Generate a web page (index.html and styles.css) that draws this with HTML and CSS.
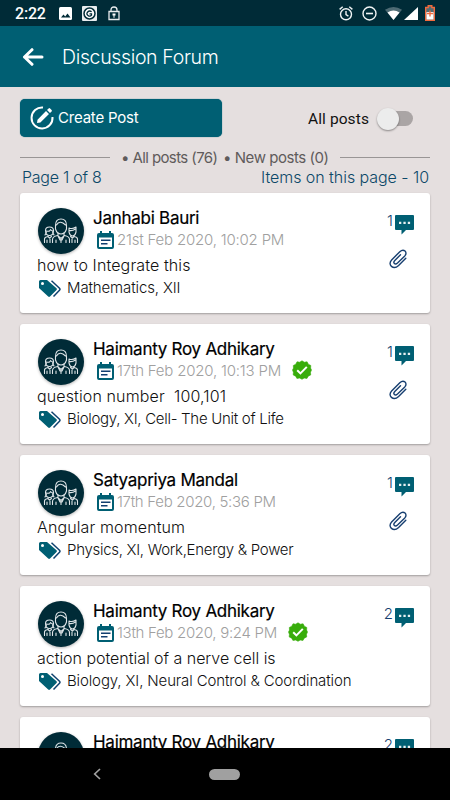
FILE: index.html
```html
<!DOCTYPE html>
<html lang="en">
<head>
<meta charset="utf-8">
<title>Discussion Forum</title>
<link rel="stylesheet" href="styles.css">
</head>
<body>
<svg class="sprite" aria-hidden="true">
  <symbol id="people" viewBox="0 0 46 46">
    <g fill="none" stroke="#dfe5e8" stroke-width="1.1" stroke-linejoin="round" stroke-linecap="round">
      <path d="M17.500 17.500q0-6.500 5.500-6.500t5.500 6.500v3.500q-1.500 5-5.500 5t-5.500-5zM18.500 17q1.500-3 4-2.800t5 2.800"/>
      <path d="M14.500 34.500v-3q0-3 5-4l3.500 3 3.500-3q5 1 5 4v3M20 25v2.500M26 25v2.500M23 30.500v4M18 32v2.500M28 32v2.500M20.500 29l1.500 3M25.500 29l-1.500 3"/>
      <path d="M7.500 22.500q0-3.500 4-3.500t4 3.500q0 5-4 5t-4-5zM8.500 23q3.500 1 4-1.500 1 1.500 2.500 1.500M7 27l1.500-3M16 27l-1.500-3"/>
      <path d="M31 20q3.500 1.500 7-1v5q-1 4-3.500 4T31 24zM31.500 22.500q3 .5 6-1.500"/>
      <path d="M6.500 34.500V31q0-2 3.500-2.500l1.500 1.500 2-1.500M9 32v2.500M12 31v3.500M39.500 34.500V31q0-2-3.500-2.500L34.500 30l-2-1.500M37 32v2.500M34 31v3.500"/>
    </g>
  </symbol>
  <symbol id="calendar" viewBox="0 0 17 18">
    <path fill="#005f73" d="M2 2h1V0h2v2h7V0h2v2h1q2 0 2 2v12q0 2-2 2H2q-2 0-2-2V4q0-2 2-2zm0 4.500V16h13V6.500z"/>
    <path fill="#123f70" d="M4 8.500h9.500V10H4zM4 12h6.500v1.500H4z"/>
  </symbol>
  <symbol id="tags" viewBox="0 0 22 17">
    <path fill="#005f73" fill-rule="evenodd" d="M1.500 0H8l9.500 8.200q.8.900 0 1.800l-6.500 6.500q-.9.900-1.800 0L0 8V1.500Q0 0 1.500 0zM3.500 2a1.500 1.500 0 1 0 0 3 1.500 1.500 0 0 0 0-3z"/>
    <path fill="none" stroke="#10426f" stroke-width="1.500" d="M12.500.8l8 7.500q1 1 0 2L14.500 16.500"/>
  </symbol>
  <symbol id="chat" viewBox="0 0 19 20">
    <path fill="#005f73" d="M1 0h17q1 0 1 1v13q0 1-1 1h-7l-4.500 4.500V15H1q-1 0-1-1V1Q0 0 1 0z"/>
    <path fill="#e9f1f3" d="M4 6.700h2.300V9H4zM8.400 6.700h2.300V9H8.400zM12.800 6.700h2.300V9h-2.300z"/>
  </symbol>
  <symbol id="clip" viewBox="0 0 18 20">
    <path fill="none" stroke="#173f70" stroke-width="1.400" stroke-linecap="round" d="M16.800 9.300l-7.200 7.200c-5.300 5-11.500-.8-7-5.600l8.200-8.200c4-3.700 8.300.6 5 4.200L8.500 14c-2.500 2.300-5-.2-2.700-2.600l5.700-5.600"/>
  </symbol>
  <symbol id="verified" viewBox="0 0 20 20">
    <path fill="#38ad0b" stroke="#38ad0b" stroke-width=".6" stroke-linejoin="round" d="M10 .8l2.300 1.400 2.800-.4 1.200 2.400 2.500 1.300-.2 2.600L19.500 10l-1 2.300.2 2.600-2.500 1.300-1.200 2.200-2.800-.3L10 19.300l-2.300-1.200-2.800.3-1.200-2.200-2.500-1.300.2-2.600L.5 10l1-1.900-.2-2.600 2.500-1.300 1.200-2.400 2.700.4z"/>
    <path fill="none" stroke="#fff" stroke-width="2" d="M5.200 10.200l3.200 3.200 6.400-6.500"/>
  </symbol>
</svg>

<div class="screen">
  <div class="status">
    <span class="clock">2:22</span>
    <svg class="st-img" viewBox="0 0 13 13"><rect width="13" height="13" rx="1.500" fill="#fff"/><path fill="#002b37" d="M2 10.500l2.500-3 1.700 2L8.500 6.500l3 4z"/></svg>
    <svg class="st-g" viewBox="0 0 15 15"><rect width="15" height="15" rx="1" fill="#e8ecee"/><circle cx="7.500" cy="7.500" r="5.500" fill="#fff" stroke="#002b37" stroke-width="1.500"/><path fill="none" stroke="#002b37" stroke-width="1.300" d="M9.600 5.800Q7.500 4 5.700 6t.3 3.500 3.500-.3V7.800h-2"/></svg>
    <svg class="st-lock" viewBox="0 0 12 15"><path fill="none" stroke="#e8ecee" stroke-width="1.300" d="M1 5.500h10v8H1zM3 5.500V4q0-3 3-3t3 3v1.500"/><path fill="#fff" d="M4.500 7.500h3v2h-1v2.300h-1V9.500h-1z"/></svg>
    <span class="grow"></span>
    <svg class="st-alarm" viewBox="0 0 14 15"><g fill="none" stroke="#f1f4f5" stroke-width="1.400"><circle cx="7" cy="8.300" r="5.500"/><path d="M7 5v3.600l2.400 1.500M.6 3.400L3.700.8M13.400 3.400L10.300.8"/></g></svg>
    <svg class="st-dnd" viewBox="0 0 15 15"><circle cx="7.500" cy="7.500" r="6.500" fill="none" stroke="#f1f4f5" stroke-width="1.400"/><path stroke="#f1f4f5" stroke-width="1.600" d="M4 7.500h7"/></svg>
    <svg class="st-wifi" viewBox="0 0 17 13"><path fill="#4d6a73" d="M0 2.700q8.500-5.400 17 0L8.500 13z"/><path fill="#fff" d="M2.500 5.500q6-4 12 0L8.500 13z"/></svg>
    <svg class="st-signal" viewBox="0 0 14 13"><path fill="#fff" d="M14 0v13H0z"/></svg>
    <svg class="st-battery" viewBox="0 0 10 16"><path fill="#536b72" stroke="#f26a3d" stroke-width="1.400" d="M.7 2.500h2.500V.7h3.600v1.800h2.500v12.800H.7z"/><path fill="#fff" d="M1.500 7h7v7.500h-7z"/><path stroke="#f26a3d" stroke-width="1.300" d="M5 5.500v6M2 8.500h6"/></svg>
  </div>

  <header class="appbar">
    <svg class="back" viewBox="0 0 22 18"><path fill="none" stroke="#fff" stroke-width="3" stroke-linecap="round" stroke-linejoin="round" d="M20 9H2.500M10 1.700L2.500 9l7.500 7.300"/></svg>
    <h1>Discussion Forum</h1>
  </header>

  <main class="content">
    <div class="actions">
      <button class="create">
        <svg viewBox="0 0 24 24"><path fill="none" stroke="#fff" stroke-width="2" d="M13 1.500A10.500 10.500 0 1 0 22.500 11"/><path fill="#fff" d="M7.500 13.700L16 5l3 3-8.600 8.500-3.400.5zM17 4l1.600-1.600q.8-.7 1.500 0l1.500 1.500q.7.800 0 1.500L20 7z"/></svg>
        <span>Create Post</span>
      </button>
      <div class="filter"><span>All posts</span><span class="switch"><i></i></span></div>
    </div>
    <div class="totals"><hr><span class="total-all">• All posts (76)</span><span class="total-new">• New posts (0)</span><hr></div>
    <div class="paging"><span class="page">Page 1 of 8</span><span class="items">Items on this page - 10</span></div>

    <section class="posts">
      <article class="card">
        <div class="avatar"><svg><use href="#people"/></svg></div>
        <div class="who"><h2>Janhabi Bauri</h2><div class="when"><svg class="cal"><use href="#calendar"/></svg><time>21st Feb 2020, 10:02 PM</time></div></div>
        <div class="side"><div class="replies"><span>1</span><svg class="chat"><use href="#chat"/></svg></div><svg class="clip"><use href="#clip"/></svg></div>
        <p class="question">how to Integrate this</p>
        <div class="topic"><svg><use href="#tags"/></svg><span class="wide">Mathematics, XII</span></div>
      </article>
      <article class="card">
        <div class="avatar"><svg><use href="#people"/></svg></div>
        <div class="who"><h2>Haimanty Roy Adhikary</h2><div class="when"><svg class="cal"><use href="#calendar"/></svg><time>17th Feb 2020, 10:13 PM</time><svg class="badge"><use href="#verified"/></svg></div></div>
        <div class="side"><div class="replies"><span>1</span><svg class="chat"><use href="#chat"/></svg></div><svg class="clip"><use href="#clip"/></svg></div>
        <p class="question">question number&nbsp; 100,101</p>
        <div class="topic"><svg><use href="#tags"/></svg><span>Biology, XI, Cell- The Unit of Life</span></div>
      </article>
      <article class="card">
        <div class="avatar"><svg><use href="#people"/></svg></div>
        <div class="who"><h2>Satyapriya Mandal</h2><div class="when"><svg class="cal"><use href="#calendar"/></svg><time class="short">17th Feb 2020, 5:36 PM</time></div></div>
        <div class="side"><div class="replies"><span>1</span><svg class="chat"><use href="#chat"/></svg></div><svg class="clip"><use href="#clip"/></svg></div>
        <p class="question">Angular momentum</p>
        <div class="topic"><svg><use href="#tags"/></svg><span>Physics, XI, Work,Energy &amp; Power</span></div>
      </article>
      <article class="card">
        <div class="avatar"><svg><use href="#people"/></svg></div>
        <div class="who"><h2>Haimanty Roy Adhikary</h2><div class="when"><svg class="cal"><use href="#calendar"/></svg><time class="short">13th Feb 2020, 9:24 PM</time><svg class="badge"><use href="#verified"/></svg></div></div>
        <div class="side"><div class="replies"><span>2</span><svg class="chat"><use href="#chat"/></svg></div></div>
        <p class="question long">action potential of a nerve cell is</p>
        <div class="topic"><svg><use href="#tags"/></svg><span class="wide">Biology, XI, Neural Control &amp; Coordination</span></div>
      </article>
      <article class="card">
        <div class="avatar"><svg><use href="#people"/></svg></div>
        <div class="who"><h2>Haimanty Roy Adhikary</h2></div>
        <div class="side"><div class="replies"><span>2</span><svg class="chat"><use href="#chat"/></svg></div></div>
      </article>
    </section>
  </main>

  <nav class="navbar">
    <svg viewBox="0 0 8 12"><path fill="none" stroke="#a0a0a0" stroke-width="1.700" d="M7 1L1.700 6 7 11"/></svg>
    <span class="home"></span>
  </nav>
</div>
</body>
</html>
```

FILE: styles.css
```css
* { box-sizing: border-box; margin: 0; padding: 0; }
body { width: 450px; height: 800px; overflow: hidden; font-family: Inter, "Liberation Sans", sans-serif; color: #111; }
svg { display: block; flex: none; }
.sprite { position: absolute; width: 0; height: 0; }
.screen { display: flex; flex-direction: column; height: 800px; background: #e5dfdf; white-space: nowrap; }

.status { flex: none; height: 26px; display: flex; align-items: center; padding: 0 15px; background: #002b37; color: #fff; }
.clock { width: 44px; font: 500 16px/26px Roboto, sans-serif; letter-spacing: -.2px; padding-top: 2px; }
.grow { flex: 1; }
.st-img { width: 13px; height: 13px; margin-right: 10px; }
.st-g { width: 15px; height: 15px; margin-right: 11px; }
.st-lock { width: 12px; height: 15px; }
.st-alarm { width: 14px; height: 15px; margin-right: 9px; }
.st-dnd { width: 15px; height: 15px; margin-right: 8px; }
.st-wifi { width: 17px; height: 13px; margin-right: 2px; }
.st-signal { width: 14px; height: 13px; margin-right: 7px; }
.st-battery { width: 10px; height: 16px; }

.appbar { flex: none; height: 61px; display: flex; align-items: center; padding-left: 22px; background: #005f73; color: #fff; }
.back { width: 22px; height: 18px; margin-right: 18px; }
h1 { font-size: 19.5px; font-weight: 300; letter-spacing: -.35px; padding-top: 1px; }

.content { flex: 1; min-height: 0; overflow: hidden; padding: 12px 20px 0; }
.actions { height: 38px; display: flex; justify-content: space-between; }
.create { width: 202px; height: 38px; display: flex; align-items: center; gap: 4px; padding-left: 10px; border: 0; border-radius: 5px; background: #005f73; color: #fff; font: 400 15px Inter, sans-serif; letter-spacing: -.2px; box-shadow: 0 0 1px #005f73; }
.create svg { width: 24px; height: 24px; }
.create span { margin-top: -1px; }
.filter { display: flex; align-items: center; gap: 8px; padding: 2px 17px 0 0; font: 400 15.500px Roboto, sans-serif; letter-spacing: .1px; }
.switch { position: relative; width: 36px; height: 22px; display: flex; align-items: center; }
.switch::before { content: ""; position: absolute; left: 4px; right: 0; top: 3px; height: 15px; border-radius: 8px; background: #aaa5a5; }
.switch i { position: relative; width: 22px; height: 22px; margin-top: -1px; border-radius: 50%; background: #ececec; box-shadow: 0 1px 2px rgba(0,0,0,.4); }
.totals { height: 20px; margin-top: 10px; display: flex; align-items: center; font-size: 15px; letter-spacing: -.6px; color: #5f5b5b; }
.totals hr { width: 90px; border: 0; height: 1px; background: #999595; }
.total-all { width: 96px; margin: 0 6px 0 11px; }
.total-new { flex: 1; letter-spacing: -.45px; }
.paging { height: 20px; display: flex; justify-content: space-between; align-items: center; padding: 0 1px 0 2px; font-size: 16px; font-weight: 300; color: #0c4868; }
.page { letter-spacing: -.25px; }
.items { letter-spacing: -.05px; }

.posts { display: flex; flex-direction: column; gap: 11px; padding-top: 6px; }
.card { flex: none; height: 120px; display: grid; grid-template: 47px 23px 22px / 55px 1fr 32px; padding: 14px 15px 0 18px; background: #fff; border-radius: 3px; box-shadow: 0 1px 2px rgba(0,0,0,.3); }
.avatar { width: 46px; height: 46px; margin-top: 1px; border-radius: 50%; background: #002b37; box-shadow: 0 1px 3px rgba(0,0,0,.3); }
.avatar svg { width: 46px; height: 46px; }
h2 { font-size: 17px; line-height: 22px; font-weight: 400; letter-spacing: -.27px; color: #000; -webkit-text-stroke: .2px #000; }
.when { height: 22px; display: flex; align-items: center; margin-top: -1px; padding-left: 4px; }
.cal { width: 17px; height: 18px; margin: 1px 3px 0 0; }
time { font-size: 15px; font-weight: 300; letter-spacing: -.2px; color: #a0a0a0; }
time.short { letter-spacing: -.3px; }
.badge { width: 20px; height: 20px; margin-left: 11px; }
.replies { display: flex; justify-content: flex-end; margin: 7px 1px 0 -10px; font-size: 15px; line-height: 13px; font-weight: 300; color: #173f70; }
.replies span { margin-right: 2px; }
.chat { width: 19px; height: 20px; margin-top: 1px; }
.clip { width: 18px; height: 20px; margin: 14px 0 0 6px; }
.question { grid-column: 1 / -1; margin-left: -1px; font-size: 16px; line-height: 22px; font-weight: 300; letter-spacing: .12px; }
.question.long { letter-spacing: -.03px; }
.topic { grid-column: 1 / -1; display: flex; align-items: center; gap: 6px; padding-left: 1px; font-size: 15px; font-weight: 300; letter-spacing: -.29px; }
.topic svg { width: 22px; height: 17px; margin-top: 1px; }
.topic span { margin-top: -1px; }
.topic .wide { letter-spacing: -.13px; }

.navbar { flex: none; height: 52px; display: flex; align-items: center; gap: 108px; padding-left: 93px; background: #000; }
.navbar svg { width: 8px; height: 12px; }
.home { width: 31px; height: 11px; border-radius: 6px; background: #a0a0a0; }
```
